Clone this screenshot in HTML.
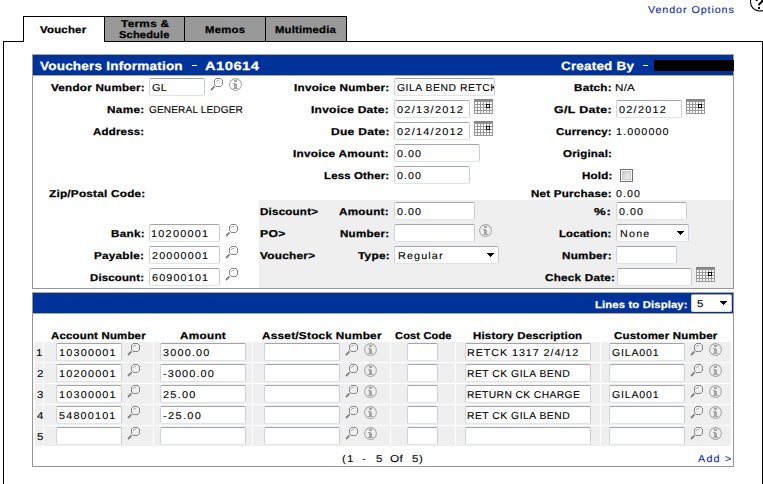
<!DOCTYPE html>
<html><head><meta charset="utf-8"><style>
html,body{margin:0;padding:0;background:#fff;width:763px;height:484px;overflow:hidden;position:relative}
body{font-family:"Liberation Sans",sans-serif;text-rendering:geometricPrecision}
body div{white-space:pre;line-height:20px}
body > div > div, body > div{transform-origin:0 0}
.inp{position:absolute;border:1px solid;border-color:#a4a4ac #cdcdda #dde5e5 #d2d2de;border-radius:2px}
</style></head><body>
<div style="position:absolute;left:3px;top:41px;width:1px;height:443px;background:#000"></div>
<div style="position:absolute;left:3px;top:41px;width:21px;height:1px;background:#000"></div>
<div style="position:absolute;left:104px;top:41px;width:659px;height:1px;background:#000"></div>
<div style="position:absolute;left:762px;top:41px;width:1px;height:443px;background:#000"></div>
<div style="position:absolute;left:23px;top:16px;width:1px;height:26px;background:#000"></div>
<div style="position:absolute;left:23px;top:16px;width:324px;height:1px;background:#000"></div>
<div style="position:absolute;left:105px;top:17px;width:79px;height:24px;background:#999"></div>
<div style="position:absolute;left:185px;top:17px;width:80px;height:24px;background:#999"></div>
<div style="position:absolute;left:266px;top:17px;width:80px;height:24px;background:#999"></div>
<div style="position:absolute;left:104px;top:16px;width:1px;height:26px;background:#000"></div>
<div style="position:absolute;left:184px;top:16px;width:1px;height:26px;background:#000"></div>
<div style="position:absolute;left:265px;top:16px;width:1px;height:26px;background:#000"></div>
<div style="position:absolute;left:346px;top:16px;width:1px;height:26px;background:#000"></div>
<svg style="position:absolute;left:746px;top:0px" width="17" height="14"><circle cx="13.5" cy="2" r="9" fill="#fff" stroke="#000" stroke-width="1.1"/><path d="M10.6,1 C10.4,-3.2 16.6,-3.4 16.4,0.4 C16.3,2.6 13.2,3 12.9,5.3" fill="none" stroke="#000" stroke-width="2"/><rect x="12" y="7" width="2" height="2" fill="#000"/></svg>
<div style="position:absolute;left:32px;top:54px;width:702px;height:235px;border:1px solid #959595;border-top-color:#aca899;box-sizing:border-box;background:#fff"></div>
<div style="position:absolute;left:33px;top:75px;width:700px;height:1px;background:#aca899"></div>
<div style="position:absolute;left:33px;top:55px;width:700px;height:20px;background:#003399"></div>
<div style="position:absolute;left:259px;top:200px;width:474px;height:88px;background:#efefef"></div>
<div style="position:absolute;left:192px;top:65px;width:5px;height:1px;background:#fff"></div>
<div style="position:absolute;left:643px;top:65px;width:5px;height:1px;background:#fff"></div>
<div style="position:absolute;left:654px;top:60px;width:80px;height:11px;background:#000"></div>
<div class="inp" style="left:149px;top:78px;width:54px;height:16px;background:#fff"></div>
<svg style="position:absolute;left:210px;top:78px" width="14" height="14"><g fill="#888" shape-rendering="crispEdges"><rect x="6" y="0" width="1" height="1"/><rect x="6" y="8" width="1" height="1"/><rect x="7" y="0" width="1" height="1"/><rect x="7" y="8" width="1" height="1"/><rect x="8" y="0" width="1" height="1"/><rect x="8" y="8" width="1" height="1"/><rect x="9" y="0" width="1" height="1"/><rect x="9" y="8" width="1" height="1"/><rect x="10" y="0" width="1" height="1"/><rect x="10" y="8" width="1" height="1"/><rect x="5" y="1" width="1" height="1"/><rect x="11" y="1" width="1" height="1"/><rect x="5" y="7" width="1" height="1"/><rect x="11" y="7" width="1" height="1"/><rect x="4" y="2" width="1" height="1"/><rect x="12" y="2" width="1" height="1"/><rect x="4" y="3" width="1" height="1"/><rect x="12" y="3" width="1" height="1"/><rect x="4" y="4" width="1" height="1"/><rect x="12" y="4" width="1" height="1"/><rect x="4" y="5" width="1" height="1"/><rect x="12" y="5" width="1" height="1"/><rect x="4" y="6" width="1" height="1"/><rect x="12" y="6" width="1" height="1"/></g><g fill="#b0b0b0" shape-rendering="crispEdges"><rect x="7" y="2" width="2" height="1"/><rect x="6" y="3" width="1" height="1"/></g><line x1="1" y1="12" x2="4.6" y2="8.4" stroke="#808080" stroke-width="1.8"/></svg>
<svg style="position:absolute;left:229px;top:78px" width="13" height="13"><circle cx="6.5" cy="6.5" r="5.9" fill="none" stroke="#a8a8a8" stroke-width="1.05"/><g fill="#a6a6a6" shape-rendering="crispEdges"><rect x="5" y="2" width="3" height="2"/><rect x="4" y="5" width="3" height="1"/><rect x="5" y="6" width="2.6" height="4"/><rect x="4" y="10" width="4.6" height="1"/></g></svg>
<div class="inp" style="left:394px;top:78px;width:99px;height:16px;background:#fff"></div>
<div class="inp" style="left:394px;top:100px;width:74px;height:16px;background:#fff"></div>
<svg style="position:absolute;left:474px;top:99px" width="19" height="15" shape-rendering="crispEdges"><rect x="0" y="0" width="19" height="15" fill="#999"/><rect x="0" y="0" width="19" height="2" fill="#858585"/><rect x="1" y="3" width="2" height="2" fill="#fff"/><rect x="1" y="6" width="2" height="2" fill="#fff"/><rect x="1" y="9" width="2" height="2" fill="#fff"/><rect x="1" y="12" width="2" height="2" fill="#fff"/><rect x="4" y="3" width="2" height="2" fill="#fff"/><rect x="4" y="6" width="2" height="2" fill="#fff"/><rect x="4" y="9" width="2" height="2" fill="#fff"/><rect x="4" y="12" width="2" height="2" fill="#fff"/><rect x="7" y="3" width="2" height="2" fill="#fff"/><rect x="7" y="6" width="2" height="2" fill="#fff"/><rect x="7" y="9" width="2" height="2" fill="#fff"/><rect x="7" y="12" width="2" height="2" fill="#fff"/><rect x="10" y="3" width="2" height="2" fill="#fff"/><rect x="10" y="6" width="2" height="2" fill="#fff"/><rect x="10" y="9" width="2" height="2" fill="#fff"/><rect x="10" y="12" width="2" height="2" fill="#fff"/><rect x="13" y="3" width="2" height="2" fill="#fff"/><rect x="13" y="6" width="2" height="2" fill="#fff"/><rect x="13" y="9" width="2" height="2" fill="#fff"/><rect x="13" y="12" width="2" height="2" fill="#fff"/><rect x="16" y="3" width="2" height="2" fill="#fff"/><rect x="16" y="6" width="2" height="2" fill="#fff"/><rect x="16" y="9" width="2" height="2" fill="#fff"/><rect x="16" y="12" width="2" height="2" fill="#fff"/><rect x="12" y="5" width="4" height="4" fill="#111"/><rect x="13" y="6" width="2" height="2" fill="#fff"/></svg>
<div class="inp" style="left:394px;top:122px;width:74px;height:16px;background:#fff"></div>
<svg style="position:absolute;left:474px;top:121px" width="19" height="15" shape-rendering="crispEdges"><rect x="0" y="0" width="19" height="15" fill="#999"/><rect x="0" y="0" width="19" height="2" fill="#858585"/><rect x="1" y="3" width="2" height="2" fill="#fff"/><rect x="1" y="6" width="2" height="2" fill="#fff"/><rect x="1" y="9" width="2" height="2" fill="#fff"/><rect x="1" y="12" width="2" height="2" fill="#fff"/><rect x="4" y="3" width="2" height="2" fill="#fff"/><rect x="4" y="6" width="2" height="2" fill="#fff"/><rect x="4" y="9" width="2" height="2" fill="#fff"/><rect x="4" y="12" width="2" height="2" fill="#fff"/><rect x="7" y="3" width="2" height="2" fill="#fff"/><rect x="7" y="6" width="2" height="2" fill="#fff"/><rect x="7" y="9" width="2" height="2" fill="#fff"/><rect x="7" y="12" width="2" height="2" fill="#fff"/><rect x="10" y="3" width="2" height="2" fill="#fff"/><rect x="10" y="6" width="2" height="2" fill="#fff"/><rect x="10" y="9" width="2" height="2" fill="#fff"/><rect x="10" y="12" width="2" height="2" fill="#fff"/><rect x="13" y="3" width="2" height="2" fill="#fff"/><rect x="13" y="6" width="2" height="2" fill="#fff"/><rect x="13" y="9" width="2" height="2" fill="#fff"/><rect x="13" y="12" width="2" height="2" fill="#fff"/><rect x="16" y="3" width="2" height="2" fill="#fff"/><rect x="16" y="6" width="2" height="2" fill="#fff"/><rect x="16" y="9" width="2" height="2" fill="#fff"/><rect x="16" y="12" width="2" height="2" fill="#fff"/><rect x="12" y="5" width="4" height="4" fill="#111"/><rect x="13" y="6" width="2" height="2" fill="#fff"/></svg>
<div class="inp" style="left:394px;top:144px;width:84px;height:16px;background:#fff"></div>
<div class="inp" style="left:394px;top:166px;width:74px;height:16px;background:#fff"></div>
<div class="inp" style="left:616px;top:100px;width:64px;height:16px;background:#fff"></div>
<svg style="position:absolute;left:686px;top:99px" width="19" height="15" shape-rendering="crispEdges"><rect x="0" y="0" width="19" height="15" fill="#999"/><rect x="0" y="0" width="19" height="2" fill="#858585"/><rect x="1" y="3" width="2" height="2" fill="#fff"/><rect x="1" y="6" width="2" height="2" fill="#fff"/><rect x="1" y="9" width="2" height="2" fill="#fff"/><rect x="1" y="12" width="2" height="2" fill="#fff"/><rect x="4" y="3" width="2" height="2" fill="#fff"/><rect x="4" y="6" width="2" height="2" fill="#fff"/><rect x="4" y="9" width="2" height="2" fill="#fff"/><rect x="4" y="12" width="2" height="2" fill="#fff"/><rect x="7" y="3" width="2" height="2" fill="#fff"/><rect x="7" y="6" width="2" height="2" fill="#fff"/><rect x="7" y="9" width="2" height="2" fill="#fff"/><rect x="7" y="12" width="2" height="2" fill="#fff"/><rect x="10" y="3" width="2" height="2" fill="#fff"/><rect x="10" y="6" width="2" height="2" fill="#fff"/><rect x="10" y="9" width="2" height="2" fill="#fff"/><rect x="10" y="12" width="2" height="2" fill="#fff"/><rect x="13" y="3" width="2" height="2" fill="#fff"/><rect x="13" y="6" width="2" height="2" fill="#fff"/><rect x="13" y="9" width="2" height="2" fill="#fff"/><rect x="13" y="12" width="2" height="2" fill="#fff"/><rect x="16" y="3" width="2" height="2" fill="#fff"/><rect x="16" y="6" width="2" height="2" fill="#fff"/><rect x="16" y="9" width="2" height="2" fill="#fff"/><rect x="16" y="12" width="2" height="2" fill="#fff"/><rect x="12" y="5" width="4" height="4" fill="#111"/><rect x="13" y="6" width="2" height="2" fill="#fff"/></svg>
<div style="position:absolute;left:620px;top:169px;width:11px;height:11px;border:1px solid #707070;background:#fff"></div><div style="position:absolute;left:622px;top:171px;width:7px;height:7px;border:1px solid #c6c6c6;background:linear-gradient(135deg,#cbcbcb,#f4f4f4)"></div>
<div class="inp" style="left:394px;top:202px;width:79px;height:16px;background:#fff"></div>
<div class="inp" style="left:394px;top:224px;width:79px;height:16px;background:#fff"></div>
<svg style="position:absolute;left:479px;top:224px" width="13" height="13"><circle cx="6.5" cy="6.5" r="5.9" fill="none" stroke="#a8a8a8" stroke-width="1.05"/><g fill="#a6a6a6" shape-rendering="crispEdges"><rect x="5" y="2" width="3" height="2"/><rect x="4" y="5" width="3" height="1"/><rect x="5" y="6" width="2.6" height="4"/><rect x="4" y="10" width="4.6" height="1"/></g></svg>
<div class="inp" style="left:394px;top:246px;width:103px;height:16px;background:#fff"></div>
<svg style="position:absolute;left:487px;top:253px" width="7" height="4" shape-rendering="crispEdges"><rect x="0" y="0" width="7" height="1" fill="#000"/><rect x="1" y="1" width="5" height="1" fill="#000"/><rect x="2" y="2" width="3" height="1" fill="#000"/><rect x="3" y="3" width="1" height="1" fill="#000"/></svg>
<div class="inp" style="left:616px;top:202px;width:69px;height:16px;background:#fff"></div>
<div class="inp" style="left:616px;top:224px;width:71px;height:16px;background:#fff"></div>
<svg style="position:absolute;left:677px;top:231px" width="7" height="4" shape-rendering="crispEdges"><rect x="0" y="0" width="7" height="1" fill="#000"/><rect x="1" y="1" width="5" height="1" fill="#000"/><rect x="2" y="2" width="3" height="1" fill="#000"/><rect x="3" y="3" width="1" height="1" fill="#000"/></svg>
<div class="inp" style="left:616px;top:246px;width:59px;height:16px;background:#fff"></div>
<div class="inp" style="left:617px;top:268px;width:73px;height:16px;background:#fff"></div>
<svg style="position:absolute;left:696px;top:267px" width="19" height="15" shape-rendering="crispEdges"><rect x="0" y="0" width="19" height="15" fill="#999"/><rect x="0" y="0" width="19" height="2" fill="#858585"/><rect x="1" y="3" width="2" height="2" fill="#fff"/><rect x="1" y="6" width="2" height="2" fill="#fff"/><rect x="1" y="9" width="2" height="2" fill="#fff"/><rect x="1" y="12" width="2" height="2" fill="#fff"/><rect x="4" y="3" width="2" height="2" fill="#fff"/><rect x="4" y="6" width="2" height="2" fill="#fff"/><rect x="4" y="9" width="2" height="2" fill="#fff"/><rect x="4" y="12" width="2" height="2" fill="#fff"/><rect x="7" y="3" width="2" height="2" fill="#fff"/><rect x="7" y="6" width="2" height="2" fill="#fff"/><rect x="7" y="9" width="2" height="2" fill="#fff"/><rect x="7" y="12" width="2" height="2" fill="#fff"/><rect x="10" y="3" width="2" height="2" fill="#fff"/><rect x="10" y="6" width="2" height="2" fill="#fff"/><rect x="10" y="9" width="2" height="2" fill="#fff"/><rect x="10" y="12" width="2" height="2" fill="#fff"/><rect x="13" y="3" width="2" height="2" fill="#fff"/><rect x="13" y="6" width="2" height="2" fill="#fff"/><rect x="13" y="9" width="2" height="2" fill="#fff"/><rect x="13" y="12" width="2" height="2" fill="#fff"/><rect x="16" y="3" width="2" height="2" fill="#fff"/><rect x="16" y="6" width="2" height="2" fill="#fff"/><rect x="16" y="9" width="2" height="2" fill="#fff"/><rect x="16" y="12" width="2" height="2" fill="#fff"/><rect x="12" y="5" width="4" height="4" fill="#111"/><rect x="13" y="6" width="2" height="2" fill="#fff"/></svg>
<div class="inp" style="left:149px;top:224px;width:69px;height:16px;background:#fff"></div>
<svg style="position:absolute;left:225px;top:224px" width="14" height="14"><g fill="#888" shape-rendering="crispEdges"><rect x="6" y="0" width="1" height="1"/><rect x="6" y="8" width="1" height="1"/><rect x="7" y="0" width="1" height="1"/><rect x="7" y="8" width="1" height="1"/><rect x="8" y="0" width="1" height="1"/><rect x="8" y="8" width="1" height="1"/><rect x="9" y="0" width="1" height="1"/><rect x="9" y="8" width="1" height="1"/><rect x="10" y="0" width="1" height="1"/><rect x="10" y="8" width="1" height="1"/><rect x="5" y="1" width="1" height="1"/><rect x="11" y="1" width="1" height="1"/><rect x="5" y="7" width="1" height="1"/><rect x="11" y="7" width="1" height="1"/><rect x="4" y="2" width="1" height="1"/><rect x="12" y="2" width="1" height="1"/><rect x="4" y="3" width="1" height="1"/><rect x="12" y="3" width="1" height="1"/><rect x="4" y="4" width="1" height="1"/><rect x="12" y="4" width="1" height="1"/><rect x="4" y="5" width="1" height="1"/><rect x="12" y="5" width="1" height="1"/><rect x="4" y="6" width="1" height="1"/><rect x="12" y="6" width="1" height="1"/></g><g fill="#b0b0b0" shape-rendering="crispEdges"><rect x="7" y="2" width="2" height="1"/><rect x="6" y="3" width="1" height="1"/></g><line x1="1" y1="12" x2="4.6" y2="8.4" stroke="#808080" stroke-width="1.8"/></svg>
<div class="inp" style="left:149px;top:246px;width:69px;height:16px;background:#fff"></div>
<svg style="position:absolute;left:225px;top:246px" width="14" height="14"><g fill="#888" shape-rendering="crispEdges"><rect x="6" y="0" width="1" height="1"/><rect x="6" y="8" width="1" height="1"/><rect x="7" y="0" width="1" height="1"/><rect x="7" y="8" width="1" height="1"/><rect x="8" y="0" width="1" height="1"/><rect x="8" y="8" width="1" height="1"/><rect x="9" y="0" width="1" height="1"/><rect x="9" y="8" width="1" height="1"/><rect x="10" y="0" width="1" height="1"/><rect x="10" y="8" width="1" height="1"/><rect x="5" y="1" width="1" height="1"/><rect x="11" y="1" width="1" height="1"/><rect x="5" y="7" width="1" height="1"/><rect x="11" y="7" width="1" height="1"/><rect x="4" y="2" width="1" height="1"/><rect x="12" y="2" width="1" height="1"/><rect x="4" y="3" width="1" height="1"/><rect x="12" y="3" width="1" height="1"/><rect x="4" y="4" width="1" height="1"/><rect x="12" y="4" width="1" height="1"/><rect x="4" y="5" width="1" height="1"/><rect x="12" y="5" width="1" height="1"/><rect x="4" y="6" width="1" height="1"/><rect x="12" y="6" width="1" height="1"/></g><g fill="#b0b0b0" shape-rendering="crispEdges"><rect x="7" y="2" width="2" height="1"/><rect x="6" y="3" width="1" height="1"/></g><line x1="1" y1="12" x2="4.6" y2="8.4" stroke="#808080" stroke-width="1.8"/></svg>
<div class="inp" style="left:149px;top:268px;width:69px;height:16px;background:#fff"></div>
<svg style="position:absolute;left:225px;top:268px" width="14" height="14"><g fill="#888" shape-rendering="crispEdges"><rect x="6" y="0" width="1" height="1"/><rect x="6" y="8" width="1" height="1"/><rect x="7" y="0" width="1" height="1"/><rect x="7" y="8" width="1" height="1"/><rect x="8" y="0" width="1" height="1"/><rect x="8" y="8" width="1" height="1"/><rect x="9" y="0" width="1" height="1"/><rect x="9" y="8" width="1" height="1"/><rect x="10" y="0" width="1" height="1"/><rect x="10" y="8" width="1" height="1"/><rect x="5" y="1" width="1" height="1"/><rect x="11" y="1" width="1" height="1"/><rect x="5" y="7" width="1" height="1"/><rect x="11" y="7" width="1" height="1"/><rect x="4" y="2" width="1" height="1"/><rect x="12" y="2" width="1" height="1"/><rect x="4" y="3" width="1" height="1"/><rect x="12" y="3" width="1" height="1"/><rect x="4" y="4" width="1" height="1"/><rect x="12" y="4" width="1" height="1"/><rect x="4" y="5" width="1" height="1"/><rect x="12" y="5" width="1" height="1"/><rect x="4" y="6" width="1" height="1"/><rect x="12" y="6" width="1" height="1"/></g><g fill="#b0b0b0" shape-rendering="crispEdges"><rect x="7" y="2" width="2" height="1"/><rect x="6" y="3" width="1" height="1"/></g><line x1="1" y1="12" x2="4.6" y2="8.4" stroke="#808080" stroke-width="1.8"/></svg>
<div style="position:absolute;left:32px;top:292px;width:702px;height:175px;border:1px solid #959595;border-top-color:#aca899;box-sizing:border-box;background:#fff"></div>
<div style="position:absolute;left:33px;top:313px;width:700px;height:1px;background:#aca899"></div>
<div style="position:absolute;left:33px;top:293px;width:700px;height:20px;background:#003399"></div>
<div class="inp" style="left:691px;top:294px;width:39px;height:16px;background:#fff"></div>
<svg style="position:absolute;left:720px;top:301px" width="7" height="4" shape-rendering="crispEdges"><rect x="0" y="0" width="7" height="1" fill="#000"/><rect x="1" y="1" width="5" height="1" fill="#000"/><rect x="2" y="2" width="3" height="1" fill="#000"/><rect x="3" y="3" width="1" height="1" fill="#000"/></svg>
<div style="position:absolute;left:35px;top:342px;width:8px;height:20px;background:#efefef"></div>
<div style="position:absolute;left:44px;top:342px;width:109px;height:20px;background:#efefef"></div>
<div style="position:absolute;left:154px;top:342px;width:98px;height:20px;background:#efefef"></div>
<div style="position:absolute;left:253px;top:342px;width:137px;height:20px;background:#efefef"></div>
<div style="position:absolute;left:391px;top:342px;width:64px;height:20px;background:#efefef"></div>
<div style="position:absolute;left:456px;top:342px;width:144px;height:20px;background:#efefef"></div>
<div style="position:absolute;left:601px;top:342px;width:130px;height:20px;background:#efefef"></div>
<div class="inp" style="left:56px;top:343px;width:64px;height:16px;background:#fff"></div>
<svg style="position:absolute;left:127px;top:343px" width="14" height="14"><g fill="#888" shape-rendering="crispEdges"><rect x="6" y="0" width="1" height="1"/><rect x="6" y="8" width="1" height="1"/><rect x="7" y="0" width="1" height="1"/><rect x="7" y="8" width="1" height="1"/><rect x="8" y="0" width="1" height="1"/><rect x="8" y="8" width="1" height="1"/><rect x="9" y="0" width="1" height="1"/><rect x="9" y="8" width="1" height="1"/><rect x="10" y="0" width="1" height="1"/><rect x="10" y="8" width="1" height="1"/><rect x="5" y="1" width="1" height="1"/><rect x="11" y="1" width="1" height="1"/><rect x="5" y="7" width="1" height="1"/><rect x="11" y="7" width="1" height="1"/><rect x="4" y="2" width="1" height="1"/><rect x="12" y="2" width="1" height="1"/><rect x="4" y="3" width="1" height="1"/><rect x="12" y="3" width="1" height="1"/><rect x="4" y="4" width="1" height="1"/><rect x="12" y="4" width="1" height="1"/><rect x="4" y="5" width="1" height="1"/><rect x="12" y="5" width="1" height="1"/><rect x="4" y="6" width="1" height="1"/><rect x="12" y="6" width="1" height="1"/></g><g fill="#b0b0b0" shape-rendering="crispEdges"><rect x="7" y="2" width="2" height="1"/><rect x="6" y="3" width="1" height="1"/></g><line x1="1" y1="12" x2="4.6" y2="8.4" stroke="#808080" stroke-width="1.8"/></svg>
<div class="inp" style="left:160px;top:343px;width:84px;height:16px;background:#fff"></div>
<div class="inp" style="left:264px;top:343px;width:74px;height:16px;background:#fff"></div>
<svg style="position:absolute;left:345px;top:343px" width="14" height="14"><g fill="#888" shape-rendering="crispEdges"><rect x="6" y="0" width="1" height="1"/><rect x="6" y="8" width="1" height="1"/><rect x="7" y="0" width="1" height="1"/><rect x="7" y="8" width="1" height="1"/><rect x="8" y="0" width="1" height="1"/><rect x="8" y="8" width="1" height="1"/><rect x="9" y="0" width="1" height="1"/><rect x="9" y="8" width="1" height="1"/><rect x="10" y="0" width="1" height="1"/><rect x="10" y="8" width="1" height="1"/><rect x="5" y="1" width="1" height="1"/><rect x="11" y="1" width="1" height="1"/><rect x="5" y="7" width="1" height="1"/><rect x="11" y="7" width="1" height="1"/><rect x="4" y="2" width="1" height="1"/><rect x="12" y="2" width="1" height="1"/><rect x="4" y="3" width="1" height="1"/><rect x="12" y="3" width="1" height="1"/><rect x="4" y="4" width="1" height="1"/><rect x="12" y="4" width="1" height="1"/><rect x="4" y="5" width="1" height="1"/><rect x="12" y="5" width="1" height="1"/><rect x="4" y="6" width="1" height="1"/><rect x="12" y="6" width="1" height="1"/></g><g fill="#b0b0b0" shape-rendering="crispEdges"><rect x="7" y="2" width="2" height="1"/><rect x="6" y="3" width="1" height="1"/></g><line x1="1" y1="12" x2="4.6" y2="8.4" stroke="#808080" stroke-width="1.8"/></svg>
<svg style="position:absolute;left:364px;top:343px" width="13" height="13"><circle cx="6.5" cy="6.5" r="5.9" fill="none" stroke="#a8a8a8" stroke-width="1.05"/><g fill="#a6a6a6" shape-rendering="crispEdges"><rect x="5" y="2" width="3" height="2"/><rect x="4" y="5" width="3" height="1"/><rect x="5" y="6" width="2.6" height="4"/><rect x="4" y="10" width="4.6" height="1"/></g></svg>
<div class="inp" style="left:407px;top:343px;width:29px;height:16px;background:#fff"></div>
<div class="inp" style="left:465px;top:343px;width:124px;height:16px;background:#fff"></div>
<div class="inp" style="left:609px;top:343px;width:74px;height:16px;background:#fff"></div>
<svg style="position:absolute;left:690px;top:343px" width="14" height="14"><g fill="#888" shape-rendering="crispEdges"><rect x="6" y="0" width="1" height="1"/><rect x="6" y="8" width="1" height="1"/><rect x="7" y="0" width="1" height="1"/><rect x="7" y="8" width="1" height="1"/><rect x="8" y="0" width="1" height="1"/><rect x="8" y="8" width="1" height="1"/><rect x="9" y="0" width="1" height="1"/><rect x="9" y="8" width="1" height="1"/><rect x="10" y="0" width="1" height="1"/><rect x="10" y="8" width="1" height="1"/><rect x="5" y="1" width="1" height="1"/><rect x="11" y="1" width="1" height="1"/><rect x="5" y="7" width="1" height="1"/><rect x="11" y="7" width="1" height="1"/><rect x="4" y="2" width="1" height="1"/><rect x="12" y="2" width="1" height="1"/><rect x="4" y="3" width="1" height="1"/><rect x="12" y="3" width="1" height="1"/><rect x="4" y="4" width="1" height="1"/><rect x="12" y="4" width="1" height="1"/><rect x="4" y="5" width="1" height="1"/><rect x="12" y="5" width="1" height="1"/><rect x="4" y="6" width="1" height="1"/><rect x="12" y="6" width="1" height="1"/></g><g fill="#b0b0b0" shape-rendering="crispEdges"><rect x="7" y="2" width="2" height="1"/><rect x="6" y="3" width="1" height="1"/></g><line x1="1" y1="12" x2="4.6" y2="8.4" stroke="#808080" stroke-width="1.8"/></svg>
<svg style="position:absolute;left:709px;top:343px" width="13" height="13"><circle cx="6.5" cy="6.5" r="5.9" fill="none" stroke="#a8a8a8" stroke-width="1.05"/><g fill="#a6a6a6" shape-rendering="crispEdges"><rect x="5" y="2" width="3" height="2"/><rect x="4" y="5" width="3" height="1"/><rect x="5" y="6" width="2.6" height="4"/><rect x="4" y="10" width="4.6" height="1"/></g></svg>
<div style="position:absolute;left:35px;top:363px;width:8px;height:20px;background:#efefef"></div>
<div style="position:absolute;left:44px;top:363px;width:109px;height:20px;background:#efefef"></div>
<div style="position:absolute;left:154px;top:363px;width:98px;height:20px;background:#efefef"></div>
<div style="position:absolute;left:253px;top:363px;width:137px;height:20px;background:#efefef"></div>
<div style="position:absolute;left:391px;top:363px;width:64px;height:20px;background:#efefef"></div>
<div style="position:absolute;left:456px;top:363px;width:144px;height:20px;background:#efefef"></div>
<div style="position:absolute;left:601px;top:363px;width:130px;height:20px;background:#efefef"></div>
<div class="inp" style="left:56px;top:364px;width:64px;height:16px;background:#fff"></div>
<svg style="position:absolute;left:127px;top:364px" width="14" height="14"><g fill="#888" shape-rendering="crispEdges"><rect x="6" y="0" width="1" height="1"/><rect x="6" y="8" width="1" height="1"/><rect x="7" y="0" width="1" height="1"/><rect x="7" y="8" width="1" height="1"/><rect x="8" y="0" width="1" height="1"/><rect x="8" y="8" width="1" height="1"/><rect x="9" y="0" width="1" height="1"/><rect x="9" y="8" width="1" height="1"/><rect x="10" y="0" width="1" height="1"/><rect x="10" y="8" width="1" height="1"/><rect x="5" y="1" width="1" height="1"/><rect x="11" y="1" width="1" height="1"/><rect x="5" y="7" width="1" height="1"/><rect x="11" y="7" width="1" height="1"/><rect x="4" y="2" width="1" height="1"/><rect x="12" y="2" width="1" height="1"/><rect x="4" y="3" width="1" height="1"/><rect x="12" y="3" width="1" height="1"/><rect x="4" y="4" width="1" height="1"/><rect x="12" y="4" width="1" height="1"/><rect x="4" y="5" width="1" height="1"/><rect x="12" y="5" width="1" height="1"/><rect x="4" y="6" width="1" height="1"/><rect x="12" y="6" width="1" height="1"/></g><g fill="#b0b0b0" shape-rendering="crispEdges"><rect x="7" y="2" width="2" height="1"/><rect x="6" y="3" width="1" height="1"/></g><line x1="1" y1="12" x2="4.6" y2="8.4" stroke="#808080" stroke-width="1.8"/></svg>
<div class="inp" style="left:160px;top:364px;width:84px;height:16px;background:#fff"></div>
<div class="inp" style="left:264px;top:364px;width:74px;height:16px;background:#fff"></div>
<svg style="position:absolute;left:345px;top:364px" width="14" height="14"><g fill="#888" shape-rendering="crispEdges"><rect x="6" y="0" width="1" height="1"/><rect x="6" y="8" width="1" height="1"/><rect x="7" y="0" width="1" height="1"/><rect x="7" y="8" width="1" height="1"/><rect x="8" y="0" width="1" height="1"/><rect x="8" y="8" width="1" height="1"/><rect x="9" y="0" width="1" height="1"/><rect x="9" y="8" width="1" height="1"/><rect x="10" y="0" width="1" height="1"/><rect x="10" y="8" width="1" height="1"/><rect x="5" y="1" width="1" height="1"/><rect x="11" y="1" width="1" height="1"/><rect x="5" y="7" width="1" height="1"/><rect x="11" y="7" width="1" height="1"/><rect x="4" y="2" width="1" height="1"/><rect x="12" y="2" width="1" height="1"/><rect x="4" y="3" width="1" height="1"/><rect x="12" y="3" width="1" height="1"/><rect x="4" y="4" width="1" height="1"/><rect x="12" y="4" width="1" height="1"/><rect x="4" y="5" width="1" height="1"/><rect x="12" y="5" width="1" height="1"/><rect x="4" y="6" width="1" height="1"/><rect x="12" y="6" width="1" height="1"/></g><g fill="#b0b0b0" shape-rendering="crispEdges"><rect x="7" y="2" width="2" height="1"/><rect x="6" y="3" width="1" height="1"/></g><line x1="1" y1="12" x2="4.6" y2="8.4" stroke="#808080" stroke-width="1.8"/></svg>
<svg style="position:absolute;left:364px;top:364px" width="13" height="13"><circle cx="6.5" cy="6.5" r="5.9" fill="none" stroke="#a8a8a8" stroke-width="1.05"/><g fill="#a6a6a6" shape-rendering="crispEdges"><rect x="5" y="2" width="3" height="2"/><rect x="4" y="5" width="3" height="1"/><rect x="5" y="6" width="2.6" height="4"/><rect x="4" y="10" width="4.6" height="1"/></g></svg>
<div class="inp" style="left:407px;top:364px;width:29px;height:16px;background:#fff"></div>
<div class="inp" style="left:465px;top:364px;width:124px;height:16px;background:#fff"></div>
<div class="inp" style="left:609px;top:364px;width:74px;height:16px;background:#fff"></div>
<svg style="position:absolute;left:690px;top:364px" width="14" height="14"><g fill="#888" shape-rendering="crispEdges"><rect x="6" y="0" width="1" height="1"/><rect x="6" y="8" width="1" height="1"/><rect x="7" y="0" width="1" height="1"/><rect x="7" y="8" width="1" height="1"/><rect x="8" y="0" width="1" height="1"/><rect x="8" y="8" width="1" height="1"/><rect x="9" y="0" width="1" height="1"/><rect x="9" y="8" width="1" height="1"/><rect x="10" y="0" width="1" height="1"/><rect x="10" y="8" width="1" height="1"/><rect x="5" y="1" width="1" height="1"/><rect x="11" y="1" width="1" height="1"/><rect x="5" y="7" width="1" height="1"/><rect x="11" y="7" width="1" height="1"/><rect x="4" y="2" width="1" height="1"/><rect x="12" y="2" width="1" height="1"/><rect x="4" y="3" width="1" height="1"/><rect x="12" y="3" width="1" height="1"/><rect x="4" y="4" width="1" height="1"/><rect x="12" y="4" width="1" height="1"/><rect x="4" y="5" width="1" height="1"/><rect x="12" y="5" width="1" height="1"/><rect x="4" y="6" width="1" height="1"/><rect x="12" y="6" width="1" height="1"/></g><g fill="#b0b0b0" shape-rendering="crispEdges"><rect x="7" y="2" width="2" height="1"/><rect x="6" y="3" width="1" height="1"/></g><line x1="1" y1="12" x2="4.6" y2="8.4" stroke="#808080" stroke-width="1.8"/></svg>
<svg style="position:absolute;left:709px;top:364px" width="13" height="13"><circle cx="6.5" cy="6.5" r="5.9" fill="none" stroke="#a8a8a8" stroke-width="1.05"/><g fill="#a6a6a6" shape-rendering="crispEdges"><rect x="5" y="2" width="3" height="2"/><rect x="4" y="5" width="3" height="1"/><rect x="5" y="6" width="2.6" height="4"/><rect x="4" y="10" width="4.6" height="1"/></g></svg>
<div style="position:absolute;left:35px;top:384px;width:8px;height:20px;background:#efefef"></div>
<div style="position:absolute;left:44px;top:384px;width:109px;height:20px;background:#efefef"></div>
<div style="position:absolute;left:154px;top:384px;width:98px;height:20px;background:#efefef"></div>
<div style="position:absolute;left:253px;top:384px;width:137px;height:20px;background:#efefef"></div>
<div style="position:absolute;left:391px;top:384px;width:64px;height:20px;background:#efefef"></div>
<div style="position:absolute;left:456px;top:384px;width:144px;height:20px;background:#efefef"></div>
<div style="position:absolute;left:601px;top:384px;width:130px;height:20px;background:#efefef"></div>
<div class="inp" style="left:56px;top:385px;width:64px;height:16px;background:#fff"></div>
<svg style="position:absolute;left:127px;top:385px" width="14" height="14"><g fill="#888" shape-rendering="crispEdges"><rect x="6" y="0" width="1" height="1"/><rect x="6" y="8" width="1" height="1"/><rect x="7" y="0" width="1" height="1"/><rect x="7" y="8" width="1" height="1"/><rect x="8" y="0" width="1" height="1"/><rect x="8" y="8" width="1" height="1"/><rect x="9" y="0" width="1" height="1"/><rect x="9" y="8" width="1" height="1"/><rect x="10" y="0" width="1" height="1"/><rect x="10" y="8" width="1" height="1"/><rect x="5" y="1" width="1" height="1"/><rect x="11" y="1" width="1" height="1"/><rect x="5" y="7" width="1" height="1"/><rect x="11" y="7" width="1" height="1"/><rect x="4" y="2" width="1" height="1"/><rect x="12" y="2" width="1" height="1"/><rect x="4" y="3" width="1" height="1"/><rect x="12" y="3" width="1" height="1"/><rect x="4" y="4" width="1" height="1"/><rect x="12" y="4" width="1" height="1"/><rect x="4" y="5" width="1" height="1"/><rect x="12" y="5" width="1" height="1"/><rect x="4" y="6" width="1" height="1"/><rect x="12" y="6" width="1" height="1"/></g><g fill="#b0b0b0" shape-rendering="crispEdges"><rect x="7" y="2" width="2" height="1"/><rect x="6" y="3" width="1" height="1"/></g><line x1="1" y1="12" x2="4.6" y2="8.4" stroke="#808080" stroke-width="1.8"/></svg>
<div class="inp" style="left:160px;top:385px;width:84px;height:16px;background:#fff"></div>
<div class="inp" style="left:264px;top:385px;width:74px;height:16px;background:#fff"></div>
<svg style="position:absolute;left:345px;top:385px" width="14" height="14"><g fill="#888" shape-rendering="crispEdges"><rect x="6" y="0" width="1" height="1"/><rect x="6" y="8" width="1" height="1"/><rect x="7" y="0" width="1" height="1"/><rect x="7" y="8" width="1" height="1"/><rect x="8" y="0" width="1" height="1"/><rect x="8" y="8" width="1" height="1"/><rect x="9" y="0" width="1" height="1"/><rect x="9" y="8" width="1" height="1"/><rect x="10" y="0" width="1" height="1"/><rect x="10" y="8" width="1" height="1"/><rect x="5" y="1" width="1" height="1"/><rect x="11" y="1" width="1" height="1"/><rect x="5" y="7" width="1" height="1"/><rect x="11" y="7" width="1" height="1"/><rect x="4" y="2" width="1" height="1"/><rect x="12" y="2" width="1" height="1"/><rect x="4" y="3" width="1" height="1"/><rect x="12" y="3" width="1" height="1"/><rect x="4" y="4" width="1" height="1"/><rect x="12" y="4" width="1" height="1"/><rect x="4" y="5" width="1" height="1"/><rect x="12" y="5" width="1" height="1"/><rect x="4" y="6" width="1" height="1"/><rect x="12" y="6" width="1" height="1"/></g><g fill="#b0b0b0" shape-rendering="crispEdges"><rect x="7" y="2" width="2" height="1"/><rect x="6" y="3" width="1" height="1"/></g><line x1="1" y1="12" x2="4.6" y2="8.4" stroke="#808080" stroke-width="1.8"/></svg>
<svg style="position:absolute;left:364px;top:385px" width="13" height="13"><circle cx="6.5" cy="6.5" r="5.9" fill="none" stroke="#a8a8a8" stroke-width="1.05"/><g fill="#a6a6a6" shape-rendering="crispEdges"><rect x="5" y="2" width="3" height="2"/><rect x="4" y="5" width="3" height="1"/><rect x="5" y="6" width="2.6" height="4"/><rect x="4" y="10" width="4.6" height="1"/></g></svg>
<div class="inp" style="left:407px;top:385px;width:29px;height:16px;background:#fff"></div>
<div class="inp" style="left:465px;top:385px;width:124px;height:16px;background:#fff"></div>
<div class="inp" style="left:609px;top:385px;width:74px;height:16px;background:#fff"></div>
<svg style="position:absolute;left:690px;top:385px" width="14" height="14"><g fill="#888" shape-rendering="crispEdges"><rect x="6" y="0" width="1" height="1"/><rect x="6" y="8" width="1" height="1"/><rect x="7" y="0" width="1" height="1"/><rect x="7" y="8" width="1" height="1"/><rect x="8" y="0" width="1" height="1"/><rect x="8" y="8" width="1" height="1"/><rect x="9" y="0" width="1" height="1"/><rect x="9" y="8" width="1" height="1"/><rect x="10" y="0" width="1" height="1"/><rect x="10" y="8" width="1" height="1"/><rect x="5" y="1" width="1" height="1"/><rect x="11" y="1" width="1" height="1"/><rect x="5" y="7" width="1" height="1"/><rect x="11" y="7" width="1" height="1"/><rect x="4" y="2" width="1" height="1"/><rect x="12" y="2" width="1" height="1"/><rect x="4" y="3" width="1" height="1"/><rect x="12" y="3" width="1" height="1"/><rect x="4" y="4" width="1" height="1"/><rect x="12" y="4" width="1" height="1"/><rect x="4" y="5" width="1" height="1"/><rect x="12" y="5" width="1" height="1"/><rect x="4" y="6" width="1" height="1"/><rect x="12" y="6" width="1" height="1"/></g><g fill="#b0b0b0" shape-rendering="crispEdges"><rect x="7" y="2" width="2" height="1"/><rect x="6" y="3" width="1" height="1"/></g><line x1="1" y1="12" x2="4.6" y2="8.4" stroke="#808080" stroke-width="1.8"/></svg>
<svg style="position:absolute;left:709px;top:385px" width="13" height="13"><circle cx="6.5" cy="6.5" r="5.9" fill="none" stroke="#a8a8a8" stroke-width="1.05"/><g fill="#a6a6a6" shape-rendering="crispEdges"><rect x="5" y="2" width="3" height="2"/><rect x="4" y="5" width="3" height="1"/><rect x="5" y="6" width="2.6" height="4"/><rect x="4" y="10" width="4.6" height="1"/></g></svg>
<div style="position:absolute;left:35px;top:405px;width:8px;height:20px;background:#efefef"></div>
<div style="position:absolute;left:44px;top:405px;width:109px;height:20px;background:#efefef"></div>
<div style="position:absolute;left:154px;top:405px;width:98px;height:20px;background:#efefef"></div>
<div style="position:absolute;left:253px;top:405px;width:137px;height:20px;background:#efefef"></div>
<div style="position:absolute;left:391px;top:405px;width:64px;height:20px;background:#efefef"></div>
<div style="position:absolute;left:456px;top:405px;width:144px;height:20px;background:#efefef"></div>
<div style="position:absolute;left:601px;top:405px;width:130px;height:20px;background:#efefef"></div>
<div class="inp" style="left:56px;top:406px;width:64px;height:16px;background:#fff"></div>
<svg style="position:absolute;left:127px;top:406px" width="14" height="14"><g fill="#888" shape-rendering="crispEdges"><rect x="6" y="0" width="1" height="1"/><rect x="6" y="8" width="1" height="1"/><rect x="7" y="0" width="1" height="1"/><rect x="7" y="8" width="1" height="1"/><rect x="8" y="0" width="1" height="1"/><rect x="8" y="8" width="1" height="1"/><rect x="9" y="0" width="1" height="1"/><rect x="9" y="8" width="1" height="1"/><rect x="10" y="0" width="1" height="1"/><rect x="10" y="8" width="1" height="1"/><rect x="5" y="1" width="1" height="1"/><rect x="11" y="1" width="1" height="1"/><rect x="5" y="7" width="1" height="1"/><rect x="11" y="7" width="1" height="1"/><rect x="4" y="2" width="1" height="1"/><rect x="12" y="2" width="1" height="1"/><rect x="4" y="3" width="1" height="1"/><rect x="12" y="3" width="1" height="1"/><rect x="4" y="4" width="1" height="1"/><rect x="12" y="4" width="1" height="1"/><rect x="4" y="5" width="1" height="1"/><rect x="12" y="5" width="1" height="1"/><rect x="4" y="6" width="1" height="1"/><rect x="12" y="6" width="1" height="1"/></g><g fill="#b0b0b0" shape-rendering="crispEdges"><rect x="7" y="2" width="2" height="1"/><rect x="6" y="3" width="1" height="1"/></g><line x1="1" y1="12" x2="4.6" y2="8.4" stroke="#808080" stroke-width="1.8"/></svg>
<div class="inp" style="left:160px;top:406px;width:84px;height:16px;background:#fff"></div>
<div class="inp" style="left:264px;top:406px;width:74px;height:16px;background:#fff"></div>
<svg style="position:absolute;left:345px;top:406px" width="14" height="14"><g fill="#888" shape-rendering="crispEdges"><rect x="6" y="0" width="1" height="1"/><rect x="6" y="8" width="1" height="1"/><rect x="7" y="0" width="1" height="1"/><rect x="7" y="8" width="1" height="1"/><rect x="8" y="0" width="1" height="1"/><rect x="8" y="8" width="1" height="1"/><rect x="9" y="0" width="1" height="1"/><rect x="9" y="8" width="1" height="1"/><rect x="10" y="0" width="1" height="1"/><rect x="10" y="8" width="1" height="1"/><rect x="5" y="1" width="1" height="1"/><rect x="11" y="1" width="1" height="1"/><rect x="5" y="7" width="1" height="1"/><rect x="11" y="7" width="1" height="1"/><rect x="4" y="2" width="1" height="1"/><rect x="12" y="2" width="1" height="1"/><rect x="4" y="3" width="1" height="1"/><rect x="12" y="3" width="1" height="1"/><rect x="4" y="4" width="1" height="1"/><rect x="12" y="4" width="1" height="1"/><rect x="4" y="5" width="1" height="1"/><rect x="12" y="5" width="1" height="1"/><rect x="4" y="6" width="1" height="1"/><rect x="12" y="6" width="1" height="1"/></g><g fill="#b0b0b0" shape-rendering="crispEdges"><rect x="7" y="2" width="2" height="1"/><rect x="6" y="3" width="1" height="1"/></g><line x1="1" y1="12" x2="4.6" y2="8.4" stroke="#808080" stroke-width="1.8"/></svg>
<svg style="position:absolute;left:364px;top:406px" width="13" height="13"><circle cx="6.5" cy="6.5" r="5.9" fill="none" stroke="#a8a8a8" stroke-width="1.05"/><g fill="#a6a6a6" shape-rendering="crispEdges"><rect x="5" y="2" width="3" height="2"/><rect x="4" y="5" width="3" height="1"/><rect x="5" y="6" width="2.6" height="4"/><rect x="4" y="10" width="4.6" height="1"/></g></svg>
<div class="inp" style="left:407px;top:406px;width:29px;height:16px;background:#fff"></div>
<div class="inp" style="left:465px;top:406px;width:124px;height:16px;background:#fff"></div>
<div class="inp" style="left:609px;top:406px;width:74px;height:16px;background:#fff"></div>
<svg style="position:absolute;left:690px;top:406px" width="14" height="14"><g fill="#888" shape-rendering="crispEdges"><rect x="6" y="0" width="1" height="1"/><rect x="6" y="8" width="1" height="1"/><rect x="7" y="0" width="1" height="1"/><rect x="7" y="8" width="1" height="1"/><rect x="8" y="0" width="1" height="1"/><rect x="8" y="8" width="1" height="1"/><rect x="9" y="0" width="1" height="1"/><rect x="9" y="8" width="1" height="1"/><rect x="10" y="0" width="1" height="1"/><rect x="10" y="8" width="1" height="1"/><rect x="5" y="1" width="1" height="1"/><rect x="11" y="1" width="1" height="1"/><rect x="5" y="7" width="1" height="1"/><rect x="11" y="7" width="1" height="1"/><rect x="4" y="2" width="1" height="1"/><rect x="12" y="2" width="1" height="1"/><rect x="4" y="3" width="1" height="1"/><rect x="12" y="3" width="1" height="1"/><rect x="4" y="4" width="1" height="1"/><rect x="12" y="4" width="1" height="1"/><rect x="4" y="5" width="1" height="1"/><rect x="12" y="5" width="1" height="1"/><rect x="4" y="6" width="1" height="1"/><rect x="12" y="6" width="1" height="1"/></g><g fill="#b0b0b0" shape-rendering="crispEdges"><rect x="7" y="2" width="2" height="1"/><rect x="6" y="3" width="1" height="1"/></g><line x1="1" y1="12" x2="4.6" y2="8.4" stroke="#808080" stroke-width="1.8"/></svg>
<svg style="position:absolute;left:709px;top:406px" width="13" height="13"><circle cx="6.5" cy="6.5" r="5.9" fill="none" stroke="#a8a8a8" stroke-width="1.05"/><g fill="#a6a6a6" shape-rendering="crispEdges"><rect x="5" y="2" width="3" height="2"/><rect x="4" y="5" width="3" height="1"/><rect x="5" y="6" width="2.6" height="4"/><rect x="4" y="10" width="4.6" height="1"/></g></svg>
<div style="position:absolute;left:35px;top:426px;width:8px;height:20px;background:#efefef"></div>
<div style="position:absolute;left:44px;top:426px;width:109px;height:20px;background:#efefef"></div>
<div style="position:absolute;left:154px;top:426px;width:98px;height:20px;background:#efefef"></div>
<div style="position:absolute;left:253px;top:426px;width:137px;height:20px;background:#efefef"></div>
<div style="position:absolute;left:391px;top:426px;width:64px;height:20px;background:#efefef"></div>
<div style="position:absolute;left:456px;top:426px;width:144px;height:20px;background:#efefef"></div>
<div style="position:absolute;left:601px;top:426px;width:130px;height:20px;background:#efefef"></div>
<div class="inp" style="left:56px;top:427px;width:64px;height:16px;background:#fff"></div>
<svg style="position:absolute;left:127px;top:427px" width="14" height="14"><g fill="#888" shape-rendering="crispEdges"><rect x="6" y="0" width="1" height="1"/><rect x="6" y="8" width="1" height="1"/><rect x="7" y="0" width="1" height="1"/><rect x="7" y="8" width="1" height="1"/><rect x="8" y="0" width="1" height="1"/><rect x="8" y="8" width="1" height="1"/><rect x="9" y="0" width="1" height="1"/><rect x="9" y="8" width="1" height="1"/><rect x="10" y="0" width="1" height="1"/><rect x="10" y="8" width="1" height="1"/><rect x="5" y="1" width="1" height="1"/><rect x="11" y="1" width="1" height="1"/><rect x="5" y="7" width="1" height="1"/><rect x="11" y="7" width="1" height="1"/><rect x="4" y="2" width="1" height="1"/><rect x="12" y="2" width="1" height="1"/><rect x="4" y="3" width="1" height="1"/><rect x="12" y="3" width="1" height="1"/><rect x="4" y="4" width="1" height="1"/><rect x="12" y="4" width="1" height="1"/><rect x="4" y="5" width="1" height="1"/><rect x="12" y="5" width="1" height="1"/><rect x="4" y="6" width="1" height="1"/><rect x="12" y="6" width="1" height="1"/></g><g fill="#b0b0b0" shape-rendering="crispEdges"><rect x="7" y="2" width="2" height="1"/><rect x="6" y="3" width="1" height="1"/></g><line x1="1" y1="12" x2="4.6" y2="8.4" stroke="#808080" stroke-width="1.8"/></svg>
<div class="inp" style="left:160px;top:427px;width:84px;height:16px;background:#fff"></div>
<div class="inp" style="left:264px;top:427px;width:74px;height:16px;background:#fff"></div>
<svg style="position:absolute;left:345px;top:427px" width="14" height="14"><g fill="#888" shape-rendering="crispEdges"><rect x="6" y="0" width="1" height="1"/><rect x="6" y="8" width="1" height="1"/><rect x="7" y="0" width="1" height="1"/><rect x="7" y="8" width="1" height="1"/><rect x="8" y="0" width="1" height="1"/><rect x="8" y="8" width="1" height="1"/><rect x="9" y="0" width="1" height="1"/><rect x="9" y="8" width="1" height="1"/><rect x="10" y="0" width="1" height="1"/><rect x="10" y="8" width="1" height="1"/><rect x="5" y="1" width="1" height="1"/><rect x="11" y="1" width="1" height="1"/><rect x="5" y="7" width="1" height="1"/><rect x="11" y="7" width="1" height="1"/><rect x="4" y="2" width="1" height="1"/><rect x="12" y="2" width="1" height="1"/><rect x="4" y="3" width="1" height="1"/><rect x="12" y="3" width="1" height="1"/><rect x="4" y="4" width="1" height="1"/><rect x="12" y="4" width="1" height="1"/><rect x="4" y="5" width="1" height="1"/><rect x="12" y="5" width="1" height="1"/><rect x="4" y="6" width="1" height="1"/><rect x="12" y="6" width="1" height="1"/></g><g fill="#b0b0b0" shape-rendering="crispEdges"><rect x="7" y="2" width="2" height="1"/><rect x="6" y="3" width="1" height="1"/></g><line x1="1" y1="12" x2="4.6" y2="8.4" stroke="#808080" stroke-width="1.8"/></svg>
<svg style="position:absolute;left:364px;top:427px" width="13" height="13"><circle cx="6.5" cy="6.5" r="5.9" fill="none" stroke="#a8a8a8" stroke-width="1.05"/><g fill="#a6a6a6" shape-rendering="crispEdges"><rect x="5" y="2" width="3" height="2"/><rect x="4" y="5" width="3" height="1"/><rect x="5" y="6" width="2.6" height="4"/><rect x="4" y="10" width="4.6" height="1"/></g></svg>
<div class="inp" style="left:407px;top:427px;width:29px;height:16px;background:#fff"></div>
<div class="inp" style="left:465px;top:427px;width:124px;height:16px;background:#fff"></div>
<div class="inp" style="left:609px;top:427px;width:74px;height:16px;background:#fff"></div>
<svg style="position:absolute;left:690px;top:427px" width="14" height="14"><g fill="#888" shape-rendering="crispEdges"><rect x="6" y="0" width="1" height="1"/><rect x="6" y="8" width="1" height="1"/><rect x="7" y="0" width="1" height="1"/><rect x="7" y="8" width="1" height="1"/><rect x="8" y="0" width="1" height="1"/><rect x="8" y="8" width="1" height="1"/><rect x="9" y="0" width="1" height="1"/><rect x="9" y="8" width="1" height="1"/><rect x="10" y="0" width="1" height="1"/><rect x="10" y="8" width="1" height="1"/><rect x="5" y="1" width="1" height="1"/><rect x="11" y="1" width="1" height="1"/><rect x="5" y="7" width="1" height="1"/><rect x="11" y="7" width="1" height="1"/><rect x="4" y="2" width="1" height="1"/><rect x="12" y="2" width="1" height="1"/><rect x="4" y="3" width="1" height="1"/><rect x="12" y="3" width="1" height="1"/><rect x="4" y="4" width="1" height="1"/><rect x="12" y="4" width="1" height="1"/><rect x="4" y="5" width="1" height="1"/><rect x="12" y="5" width="1" height="1"/><rect x="4" y="6" width="1" height="1"/><rect x="12" y="6" width="1" height="1"/></g><g fill="#b0b0b0" shape-rendering="crispEdges"><rect x="7" y="2" width="2" height="1"/><rect x="6" y="3" width="1" height="1"/></g><line x1="1" y1="12" x2="4.6" y2="8.4" stroke="#808080" stroke-width="1.8"/></svg>
<svg style="position:absolute;left:709px;top:427px" width="13" height="13"><circle cx="6.5" cy="6.5" r="5.9" fill="none" stroke="#a8a8a8" stroke-width="1.05"/><g fill="#a6a6a6" shape-rendering="crispEdges"><rect x="5" y="2" width="3" height="2"/><rect x="4" y="5" width="3" height="1"/><rect x="5" y="6" width="2.6" height="4"/><rect x="4" y="10" width="4.6" height="1"/></g></svg>
<div style="position:absolute;left:40.10px;top:21px;font-weight:bold;font-size:10px;color:#000;transform:scaleX(1.1380);letter-spacing:0.202px;-webkit-text-stroke:0.25px #000">Voucher</div>
<div style="position:absolute;left:120.60px;top:15px;font-weight:bold;font-size:10px;color:#000;transform:scaleX(1.1805);letter-spacing:0.248px;-webkit-text-stroke:0.25px #000">Terms &amp;</div>
<div style="position:absolute;left:119.00px;top:26px;font-weight:bold;font-size:10px;color:#000;transform:scaleX(1.1067);letter-spacing:0.155px;-webkit-text-stroke:0.25px #000">Schedule</div>
<div style="position:absolute;left:204.80px;top:21px;font-weight:bold;font-size:10px;color:#000;transform:scaleX(1.1303);letter-spacing:0.252px;-webkit-text-stroke:0.25px #000">Memos</div>
<div style="position:absolute;left:274.80px;top:21px;font-weight:bold;font-size:10px;color:#000;transform:scaleX(1.1313);letter-spacing:0.171px;-webkit-text-stroke:0.25px #000">Multimedia</div>
<div style="position:absolute;left:648.00px;top:1px;font-weight:normal;font-size:10px;color:#0828a8;transform:scaleX(1.0735);letter-spacing:0.848px;-webkit-text-stroke:0.1px #0828a8">Vendor Options</div>
<div style="position:absolute;left:40.10px;top:56px;font-weight:bold;font-size:12px;color:#fff;transform:scaleX(1.1268);letter-spacing:0.182px;-webkit-text-stroke:0.25px #fff">Vouchers Information</div>
<div style="position:absolute;left:205.00px;top:56px;font-weight:bold;font-size:12px;color:#fff;transform:scaleX(1.2267);letter-spacing:0.388px;-webkit-text-stroke:0.25px #fff">A10614</div>
<div style="position:absolute;left:561.40px;top:56px;font-weight:bold;font-size:12px;color:#fff;transform:scaleX(1.1206);letter-spacing:0.188px;-webkit-text-stroke:0.25px #fff">Created By</div>
<div style="position:absolute;left:51.10px;top:79px;font-weight:bold;font-size:10px;color:#000;transform:scaleX(1.1642);letter-spacing:0.209px;-webkit-text-stroke:0.25px #000">Vendor Number:</div>
<div style="position:absolute;left:107.40px;top:101px;font-weight:bold;font-size:10px;color:#000;transform:scaleX(1.1733);letter-spacing:0.277px;-webkit-text-stroke:0.25px #000">Name:</div>
<div style="position:absolute;left:93.20px;top:123px;font-weight:bold;font-size:10px;color:#000;transform:scaleX(1.1433);letter-spacing:0.192px;-webkit-text-stroke:0.25px #000">Address:</div>
<div style="position:absolute;left:48.70px;top:185px;font-weight:bold;font-size:10px;color:#000;transform:scaleX(1.1764);letter-spacing:0.195px;-webkit-text-stroke:0.25px #000">Zip/Postal Code:</div>
<div style="position:absolute;left:111.20px;top:225px;font-weight:bold;font-size:10px;color:#000;transform:scaleX(1.1689);letter-spacing:0.244px;-webkit-text-stroke:0.25px #000">Bank:</div>
<div style="position:absolute;left:94.10px;top:247px;font-weight:bold;font-size:10px;color:#000;transform:scaleX(1.1717);letter-spacing:0.215px;-webkit-text-stroke:0.25px #000">Payable:</div>
<div style="position:absolute;left:90.10px;top:269px;font-weight:bold;font-size:10px;color:#000;transform:scaleX(1.1357);letter-spacing:0.172px;-webkit-text-stroke:0.25px #000">Discount:</div>
<div style="position:absolute;left:294.10px;top:79px;font-weight:bold;font-size:10px;color:#000;transform:scaleX(1.1713);letter-spacing:0.204px;-webkit-text-stroke:0.25px #000">Invoice Number:</div>
<div style="position:absolute;left:311.40px;top:101px;font-weight:bold;font-size:10px;color:#000;transform:scaleX(1.1987);letter-spacing:0.214px;-webkit-text-stroke:0.25px #000">Invoice Date:</div>
<div style="position:absolute;left:331.20px;top:123px;font-weight:bold;font-size:10px;color:#000;transform:scaleX(1.2017);letter-spacing:0.241px;-webkit-text-stroke:0.25px #000">Due Date:</div>
<div style="position:absolute;left:293.20px;top:145px;font-weight:bold;font-size:10px;color:#000;transform:scaleX(1.1805);letter-spacing:0.213px;-webkit-text-stroke:0.25px #000">Invoice Amount:</div>
<div style="position:absolute;left:324.40px;top:167px;font-weight:bold;font-size:10px;color:#000;transform:scaleX(1.1367);letter-spacing:0.165px;-webkit-text-stroke:0.25px #000">Less Other:</div>
<div style="position:absolute;left:339.30px;top:203px;font-weight:bold;font-size:10px;color:#000;transform:scaleX(1.1659);letter-spacing:0.243px;-webkit-text-stroke:0.25px #000">Amount:</div>
<div style="position:absolute;left:339.90px;top:225px;font-weight:bold;font-size:10px;color:#000;transform:scaleX(1.1561);letter-spacing:0.231px;-webkit-text-stroke:0.25px #000">Number:</div>
<div style="position:absolute;left:358.30px;top:247px;font-weight:bold;font-size:10px;color:#000;transform:scaleX(1.1792);letter-spacing:0.237px;-webkit-text-stroke:0.25px #000">Type:</div>
<div style="position:absolute;left:260.00px;top:203px;font-weight:bold;font-size:10px;color:#000;transform:scaleX(1.1535);letter-spacing:0.204px;-webkit-text-stroke:0.25px #000">Discount&gt;</div>
<div style="position:absolute;left:260.10px;top:225px;font-weight:bold;font-size:10px;color:#000;transform:scaleX(1.2125);letter-spacing:0.309px;-webkit-text-stroke:0.25px #000">PO&gt;</div>
<div style="position:absolute;left:260.10px;top:247px;font-weight:bold;font-size:10px;color:#000;transform:scaleX(1.1760);letter-spacing:0.241px;-webkit-text-stroke:0.25px #000">Voucher&gt;</div>
<div style="position:absolute;left:574.00px;top:79px;font-weight:bold;font-size:10px;color:#000;transform:scaleX(1.1652);letter-spacing:0.220px;-webkit-text-stroke:0.25px #000">Batch:</div>
<div style="position:absolute;left:554.20px;top:101px;font-weight:bold;font-size:10px;color:#000;transform:scaleX(1.2400);letter-spacing:0.266px;-webkit-text-stroke:0.25px #000">G/L Date:</div>
<div style="position:absolute;left:556.00px;top:123px;font-weight:bold;font-size:10px;color:#000;transform:scaleX(1.1430);letter-spacing:0.184px;-webkit-text-stroke:0.25px #000">Currency:</div>
<div style="position:absolute;left:562.60px;top:145px;font-weight:bold;font-size:10px;color:#000;transform:scaleX(1.1522);letter-spacing:0.169px;-webkit-text-stroke:0.25px #000">Original:</div>
<div style="position:absolute;left:581.60px;top:167px;font-weight:bold;font-size:10px;color:#000;transform:scaleX(1.1536);letter-spacing:0.208px;-webkit-text-stroke:0.25px #000">Hold:</div>
<div style="position:absolute;left:531.10px;top:185px;font-weight:bold;font-size:10px;color:#000;transform:scaleX(1.1588);letter-spacing:0.191px;-webkit-text-stroke:0.25px #000">Net Purchase:</div>
<div style="position:absolute;left:594.40px;top:203px;font-weight:bold;font-size:10px;color:#000;transform:scaleX(1.3188);letter-spacing:0.512px;-webkit-text-stroke:0.25px #000">%:</div>
<div style="position:absolute;left:559.10px;top:225px;font-weight:bold;font-size:10px;color:#000;transform:scaleX(1.1298);letter-spacing:0.162px;-webkit-text-stroke:0.25px #000">Location:</div>
<div style="position:absolute;left:562.00px;top:247px;font-weight:bold;font-size:10px;color:#000;transform:scaleX(1.1639);letter-spacing:0.241px;-webkit-text-stroke:0.25px #000">Number:</div>
<div style="position:absolute;left:544.90px;top:269px;font-weight:bold;font-size:10px;color:#000;transform:scaleX(1.1684);letter-spacing:0.205px;-webkit-text-stroke:0.25px #000">Check Date:</div>
<div style="position:absolute;left:148.90px;top:101px;font-weight:normal;font-size:10px;color:#000;transform:scaleX(1.0082);letter-spacing:0.134px;-webkit-text-stroke:0.1px #000">GENERAL LEDGER</div>
<div style="position:absolute;left:615.14px;top:79px;font-weight:normal;font-size:10px;color:#000;transform:scaleX(1.1647);letter-spacing:0.200px;-webkit-text-stroke:0.1px #000">N/A</div>
<div style="position:absolute;left:615.52px;top:123px;font-weight:normal;font-size:10px;color:#000;transform:scaleX(1.0790);letter-spacing:1.001px;-webkit-text-stroke:0.1px #000">1.000000</div>
<div style="position:absolute;left:616.10px;top:185px;font-weight:normal;font-size:10px;color:#000;transform:scaleX(1.0675);letter-spacing:0.984px;-webkit-text-stroke:0.1px #000">0.00</div>
<div style="position:absolute;left:150px;top:0;width:54px;height:484px;overflow:hidden"><div style="position:absolute;left:2.00px;top:79px;font-weight:normal;font-size:10px;color:#000;transform:scaleX(1.0915);letter-spacing:0.192px;-webkit-text-stroke:0.1px #000">GL</div></div>
<div style="position:absolute;left:395px;top:0;width:99px;height:484px;overflow:hidden"><div style="position:absolute;left:2.10px;top:79px;font-weight:normal;font-size:10px;color:#000;transform:scaleX(1.0364);letter-spacing:0.521px;-webkit-text-stroke:0.1px #000">GILA BEND RETCK</div></div>
<div style="position:absolute;left:395px;top:0;width:74px;height:484px;overflow:hidden"><div style="position:absolute;left:2.00px;top:101px;font-weight:normal;font-size:10px;color:#000;transform:scaleX(1.0954);letter-spacing:1.129px;-webkit-text-stroke:0.1px #000">02/13/2012</div></div>
<div style="position:absolute;left:395px;top:0;width:74px;height:484px;overflow:hidden"><div style="position:absolute;left:2.00px;top:123px;font-weight:normal;font-size:10px;color:#000;transform:scaleX(1.0954);letter-spacing:1.129px;-webkit-text-stroke:0.1px #000">02/14/2012</div></div>
<div style="position:absolute;left:395px;top:0;width:84px;height:484px;overflow:hidden"><div style="position:absolute;left:2.00px;top:145px;font-weight:normal;font-size:10px;color:#000;transform:scaleX(1.0690);letter-spacing:1.004px;-webkit-text-stroke:0.1px #000">0.00</div></div>
<div style="position:absolute;left:395px;top:0;width:74px;height:484px;overflow:hidden"><div style="position:absolute;left:2.00px;top:167px;font-weight:normal;font-size:10px;color:#000;transform:scaleX(1.0690);letter-spacing:1.004px;-webkit-text-stroke:0.1px #000">0.00</div></div>
<div style="position:absolute;left:617px;top:0;width:64px;height:484px;overflow:hidden"><div style="position:absolute;left:2.30px;top:101px;font-weight:normal;font-size:10px;color:#000;transform:scaleX(1.0892);letter-spacing:1.146px;-webkit-text-stroke:0.1px #000">02/2012</div></div>
<div style="position:absolute;left:395px;top:0;width:79px;height:484px;overflow:hidden"><div style="position:absolute;left:2.00px;top:203px;font-weight:normal;font-size:10px;color:#000;transform:scaleX(1.0690);letter-spacing:1.004px;-webkit-text-stroke:0.1px #000">0.00</div></div>
<div style="position:absolute;left:395px;top:0;width:103px;height:484px;overflow:hidden"><div style="position:absolute;left:3.02px;top:247px;font-weight:normal;font-size:10px;color:#000;transform:scaleX(1.0838);letter-spacing:1.023px;-webkit-text-stroke:0.1px #000">Regular</div></div>
<div style="position:absolute;left:617px;top:0;width:69px;height:484px;overflow:hidden"><div style="position:absolute;left:2.10px;top:203px;font-weight:normal;font-size:10px;color:#000;transform:scaleX(1.0675);letter-spacing:0.984px;-webkit-text-stroke:0.1px #000">0.00</div></div>
<div style="position:absolute;left:617px;top:0;width:71px;height:484px;overflow:hidden"><div style="position:absolute;left:2.93px;top:225px;font-weight:normal;font-size:10px;color:#000;transform:scaleX(1.0691);letter-spacing:1.157px;-webkit-text-stroke:0.1px #000">None</div></div>
<div style="position:absolute;left:150px;top:0;width:69px;height:484px;overflow:hidden"><div style="position:absolute;left:1.11px;top:225px;font-weight:normal;font-size:10px;color:#000;transform:scaleX(1.0872);letter-spacing:1.150px;-webkit-text-stroke:0.1px #000">10200001</div></div>
<div style="position:absolute;left:150px;top:0;width:69px;height:484px;overflow:hidden"><div style="position:absolute;left:2.20px;top:247px;font-weight:normal;font-size:10px;color:#000;transform:scaleX(1.0784);letter-spacing:1.066px;-webkit-text-stroke:0.1px #000">20000001</div></div>
<div style="position:absolute;left:150px;top:0;width:69px;height:484px;overflow:hidden"><div style="position:absolute;left:2.20px;top:269px;font-weight:normal;font-size:10px;color:#000;transform:scaleX(1.0784);letter-spacing:1.066px;-webkit-text-stroke:0.1px #000">60900101</div></div>
<div style="position:absolute;left:595.30px;top:296px;font-weight:bold;font-size:10px;color:#fff;transform:scaleX(1.1250);letter-spacing:0.139px;-webkit-text-stroke:0.25px #fff">Lines to Display:</div>
<div style="position:absolute;left:692px;top:0;width:39px;height:484px;overflow:hidden"><div style="position:absolute;left:4.73px;top:295px;font-weight:normal;font-size:10px;color:#000;transform:scaleX(1.1500);letter-spacing:0.000px;-webkit-text-stroke:0.1px #000">5</div></div>
<div style="position:absolute;left:51.10px;top:327px;font-weight:bold;font-size:10px;color:#000;transform:scaleX(1.1393);letter-spacing:0.190px;-webkit-text-stroke:0.25px #000">Account Number</div>
<div style="position:absolute;left:180.40px;top:327px;font-weight:bold;font-size:10px;color:#000;transform:scaleX(1.1684);letter-spacing:0.274px;-webkit-text-stroke:0.25px #000">Amount</div>
<div style="position:absolute;left:261.60px;top:327px;font-weight:bold;font-size:10px;color:#000;transform:scaleX(1.1771);letter-spacing:0.217px;-webkit-text-stroke:0.25px #000">Asset/Stock Number</div>
<div style="position:absolute;left:394.70px;top:327px;font-weight:bold;font-size:10px;color:#000;transform:scaleX(1.1040);letter-spacing:0.147px;-webkit-text-stroke:0.25px #000">Cost Code</div>
<div style="position:absolute;left:473.20px;top:327px;font-weight:bold;font-size:10px;color:#000;transform:scaleX(1.1461);letter-spacing:0.163px;-webkit-text-stroke:0.25px #000">History Description</div>
<div style="position:absolute;left:614.20px;top:327px;font-weight:bold;font-size:10px;color:#000;transform:scaleX(1.1471);letter-spacing:0.199px;-webkit-text-stroke:0.25px #000">Customer Number</div>
<div style="position:absolute;left:36.30px;top:344px;font-weight:normal;font-size:10px;color:#000;transform:scaleX(1.1500);letter-spacing:0.000px;-webkit-text-stroke:0.1px #000">1</div>
<div style="position:absolute;left:57px;top:0;width:64px;height:484px;overflow:hidden"><div style="position:absolute;left:1.52px;top:344px;font-weight:normal;font-size:10px;color:#000;transform:scaleX(1.0837);letter-spacing:1.107px;-webkit-text-stroke:0.1px #000">10300001</div></div>
<div style="position:absolute;left:161px;top:0;width:84px;height:484px;overflow:hidden"><div style="position:absolute;left:1.80px;top:344px;font-weight:normal;font-size:10px;color:#000;transform:scaleX(1.0850);letter-spacing:1.097px;-webkit-text-stroke:0.1px #000">3000.00</div></div>
<div style="position:absolute;left:466px;top:0;width:124px;height:484px;overflow:hidden"><div style="position:absolute;left:1.43px;top:344px;font-weight:normal;font-size:10px;color:#000;transform:scaleX(1.0733);letter-spacing:0.876px;-webkit-text-stroke:0.1px #000">RETCK 1317 2/4/12</div></div>
<div style="position:absolute;left:610px;top:0;width:74px;height:484px;overflow:hidden"><div style="position:absolute;left:2.20px;top:344px;font-weight:normal;font-size:10px;color:#000;transform:scaleX(1.0538);letter-spacing:0.775px;-webkit-text-stroke:0.1px #000">GILA001</div></div>
<div style="position:absolute;left:36.88px;top:365px;font-weight:normal;font-size:10px;color:#000;transform:scaleX(1.1500);letter-spacing:0.000px;-webkit-text-stroke:0.1px #000">2</div>
<div style="position:absolute;left:57px;top:0;width:64px;height:484px;overflow:hidden"><div style="position:absolute;left:1.52px;top:365px;font-weight:normal;font-size:10px;color:#000;transform:scaleX(1.0837);letter-spacing:1.107px;-webkit-text-stroke:0.1px #000">10200001</div></div>
<div style="position:absolute;left:161px;top:0;width:84px;height:484px;overflow:hidden"><div style="position:absolute;left:1.80px;top:365px;font-weight:normal;font-size:10px;color:#000;transform:scaleX(1.0855);letter-spacing:1.050px;-webkit-text-stroke:0.1px #000">-3000.00</div></div>
<div style="position:absolute;left:466px;top:0;width:124px;height:484px;overflow:hidden"><div style="position:absolute;left:1.47px;top:365px;font-weight:normal;font-size:10px;color:#000;transform:scaleX(1.0349);letter-spacing:0.478px;-webkit-text-stroke:0.1px #000">RET CK GILA BEND</div></div>
<div style="position:absolute;left:36.88px;top:386px;font-weight:normal;font-size:10px;color:#000;transform:scaleX(1.1500);letter-spacing:0.000px;-webkit-text-stroke:0.1px #000">3</div>
<div style="position:absolute;left:57px;top:0;width:64px;height:484px;overflow:hidden"><div style="position:absolute;left:1.52px;top:386px;font-weight:normal;font-size:10px;color:#000;transform:scaleX(1.0837);letter-spacing:1.107px;-webkit-text-stroke:0.1px #000">10300001</div></div>
<div style="position:absolute;left:161px;top:0;width:84px;height:484px;overflow:hidden"><div style="position:absolute;left:1.80px;top:386px;font-weight:normal;font-size:10px;color:#000;transform:scaleX(1.0876);letter-spacing:1.175px;-webkit-text-stroke:0.1px #000">25.00</div></div>
<div style="position:absolute;left:466px;top:0;width:124px;height:484px;overflow:hidden"><div style="position:absolute;left:1.47px;top:386px;font-weight:normal;font-size:10px;color:#000;transform:scaleX(1.0259);letter-spacing:0.405px;-webkit-text-stroke:0.1px #000">RETURN CK CHARGE</div></div>
<div style="position:absolute;left:610px;top:0;width:74px;height:484px;overflow:hidden"><div style="position:absolute;left:2.20px;top:386px;font-weight:normal;font-size:10px;color:#000;transform:scaleX(1.0538);letter-spacing:0.775px;-webkit-text-stroke:0.1px #000">GILA001</div></div>
<div style="position:absolute;left:36.88px;top:407px;font-weight:normal;font-size:10px;color:#000;transform:scaleX(1.1500);letter-spacing:0.000px;-webkit-text-stroke:0.1px #000">4</div>
<div style="position:absolute;left:57px;top:0;width:64px;height:484px;overflow:hidden"><div style="position:absolute;left:1.80px;top:407px;font-weight:normal;font-size:10px;color:#000;transform:scaleX(1.0805);letter-spacing:1.092px;-webkit-text-stroke:0.1px #000">54800101</div></div>
<div style="position:absolute;left:161px;top:0;width:84px;height:484px;overflow:hidden"><div style="position:absolute;left:1.80px;top:407px;font-weight:normal;font-size:10px;color:#000;transform:scaleX(1.1018);letter-spacing:1.207px;-webkit-text-stroke:0.1px #000">-25.00</div></div>
<div style="position:absolute;left:466px;top:0;width:124px;height:484px;overflow:hidden"><div style="position:absolute;left:1.47px;top:407px;font-weight:normal;font-size:10px;color:#000;transform:scaleX(1.0349);letter-spacing:0.478px;-webkit-text-stroke:0.1px #000">RET CK GILA BEND</div></div>
<div style="position:absolute;left:36.88px;top:428px;font-weight:normal;font-size:10px;color:#000;transform:scaleX(1.1500);letter-spacing:0.000px;-webkit-text-stroke:0.1px #000">5</div>
<div style="position:absolute;left:342.38px;top:450px;font-weight:normal;font-size:10px;color:#000;transform:scaleX(1.1500);letter-spacing:0.000px;-webkit-text-stroke:0.1px #000">(</div>
<div style="position:absolute;left:347.10px;top:450px;font-weight:normal;font-size:10px;color:#000;transform:scaleX(1.1500);letter-spacing:0.000px;-webkit-text-stroke:0.1px #000">1</div>
<div style="position:absolute;left:362.43px;top:450px;font-weight:normal;font-size:10px;color:#000;transform:scaleX(1.1500);letter-spacing:0.000px;-webkit-text-stroke:0.1px #000">-</div>
<div style="position:absolute;left:375.57px;top:450px;font-weight:normal;font-size:10px;color:#000;transform:scaleX(1.1500);letter-spacing:0.000px;-webkit-text-stroke:0.1px #000">5</div>
<div style="position:absolute;left:390.10px;top:450px;font-weight:normal;font-size:10px;color:#000;transform:scaleX(1.1855);letter-spacing:0.304px;-webkit-text-stroke:0.1px #000">Of</div>
<div style="position:absolute;left:411.62px;top:450px;font-weight:normal;font-size:10px;color:#000;transform:scaleX(1.1500);letter-spacing:0.000px;-webkit-text-stroke:0.1px #000">5</div>
<div style="position:absolute;left:419.32px;top:450px;font-weight:normal;font-size:10px;color:#000;transform:scaleX(1.1500);letter-spacing:0.000px;-webkit-text-stroke:0.1px #000">)</div>
<div style="position:absolute;left:697.90px;top:450px;font-weight:normal;font-size:10px;color:#0828a8;transform:scaleX(1.0785);letter-spacing:1.103px;-webkit-text-stroke:0.1px #0828a8">Add &gt;</div>
</body></html>
